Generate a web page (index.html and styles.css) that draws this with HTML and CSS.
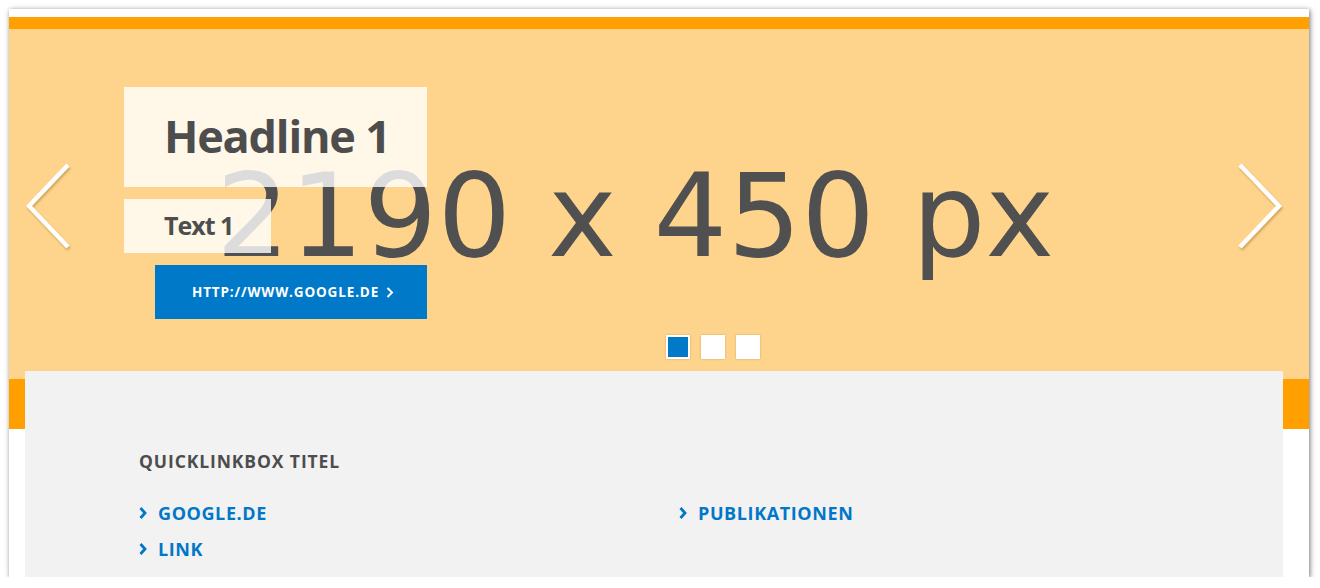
FILE: index.html
```html
<!DOCTYPE html>
<html lang="de">
<head>
<meta charset="utf-8">
<title>Stage</title>
<link rel="stylesheet" href="styles.css">
</head>
<body>
<div class="card">
  <div class="topbar"></div>
  <section class="stage">
    <div class="placeholder">2190 x 450 px</div>
    <div class="stage-content">
      <div class="headline-box"><h1 class="headline">Headline 1</h1></div>
      <div class="text-box"><p class="text">Text 1</p></div>
      <a class="cta" href="#">HTTP://WWW.GOOGLE.DE
        <svg class="cta-chev" width="8" height="11" viewBox="0 0 8 11"><polyline points="1.5,1 6,5.5 1.5,10" fill="none" stroke="#fff" stroke-width="2"/></svg>
      </a>
    </div>
    <button class="arrow arrow-left" aria-label="zurück">
      <svg width="48" height="90" viewBox="0 0 48 90"><polyline points="42,2 3,43 42,84" fill="none" stroke="#fff" stroke-width="4.5" stroke-linejoin="miter"/></svg>
    </button>
    <button class="arrow arrow-right" aria-label="weiter">
      <svg width="48" height="90" viewBox="0 0 48 90"><polyline points="3,2 42,43 3,84" fill="none" stroke="#fff" stroke-width="4.5" stroke-linejoin="miter"/></svg>
    </button>
    <div class="dots">
      <span class="dot dot-active"></span>
      <span class="dot"></span>
      <span class="dot"></span>
    </div>
  </section>
  <section class="lower">
    <div class="quicklinks">
      <h2 class="ql-title">QUICKLINKBOX TITEL</h2>
      <ul class="ql-list">
        <li><a href="#"><svg class="chev" width="8" height="14" viewBox="0 0 8 14"><polyline points="1.5,2 6,7 1.5,12" fill="none" stroke="#0077c8" stroke-width="2.8"/></svg>GOOGLE.DE</a></li>
        <li><a href="#"><svg class="chev" width="8" height="14" viewBox="0 0 8 14"><polyline points="1.5,2 6,7 1.5,12" fill="none" stroke="#0077c8" stroke-width="2.8"/></svg>PUBLIKATIONEN</a></li>
        <li><a href="#"><svg class="chev" width="8" height="14" viewBox="0 0 8 14"><polyline points="1.5,2 6,7 1.5,12" fill="none" stroke="#0077c8" stroke-width="2.8"/></svg>LINK</a></li>
      </ul>
    </div>
  </section>
</div>
</body>
</html>
```
FILE: styles.css
```css
html, body {
  margin: 0;
  padding: 0;
  background: #fff;
}
body {
  padding: 9px 11px 0 9px;
  font-family: "Open Sans", "Noto Sans", sans-serif;
}
.card {
  width: 1300px;
  height: 568px;
  background: #fff;
  padding-top: 8px;
  box-sizing: border-box;
  overflow: hidden;
  box-shadow: 1px 1px 5px rgba(0,0,0,0.55);
}
.topbar {
  height: 12px;
  background: #ffa000;
}
.stage {
  position: relative;
  height: 350px;
  background: #fed48d;
  padding: 58px 0 0 115px;
  box-sizing: border-box;
}
.placeholder {
  position: absolute;
  left: 207px;
  top: 107px;
  font-family: "DejaVu Sans", sans-serif;
  font-size: 116px;
  line-height: 160px;
  color: #505050;
  white-space: nowrap;
}
.stage-content {
  position: relative;
  display: flex;
  flex-direction: column;
  align-items: flex-start;
}
.headline-box {
  width: 303px;
  height: 100px;
  box-sizing: border-box;
  background: rgba(255,255,255,0.8);
  padding: 0 0 3px 40px;
  display: flex;
  align-items: center;
}
.headline {
  margin: 0;
  font-size: 45px;
  font-weight: 700;
  color: #4d4d4d;
  letter-spacing: -1.2px;
  line-height: 1;
}
.text-box {
  margin-top: 12px;
  width: 147px;
  height: 54px;
  box-sizing: border-box;
  background: rgba(255,255,255,0.8);
  padding: 0 0 1px 40px;
  display: flex;
  align-items: center;
}
.text {
  margin: 0;
  font-size: 25px;
  font-weight: 700;
  color: #4d4d4d;
  letter-spacing: -1px;
  line-height: 1;
}
.cta {
  margin: 12px 0 0 31px;
  width: 272px;
  height: 54px;
  box-sizing: border-box;
  background: #0079c8;
  color: #fff;
  text-decoration: none;
  font-size: 13.5px;
  font-weight: 700;
  letter-spacing: 0.85px;
  padding-left: 37px;
  display: flex;
  align-items: center;
  gap: 7px;
}
.cta-chev { display: block; }
.arrow {
  position: absolute;
  top: 134px;
  border: 0;
  padding: 0;
  background: none;
  cursor: pointer;
}
.arrow svg {
  display: block;
  filter: drop-shadow(1px 2px 1px rgba(120,80,0,0.35));
}
.arrow-left { left: 17px; }
.arrow-right { left: 1228px; }
.dots {
  position: absolute;
  left: 657px;
  top: 306px;
  display: flex;
  gap: 11px;
}
.dot {
  width: 24px;
  height: 24px;
  box-sizing: border-box;
  background: #fff;
  box-shadow: 0 0 2px rgba(120,80,0,0.35);
}
.dot-active {
  border: 2px solid #fff;
  background: #0079c8;
}
.lower {
  background: linear-gradient(#ffa000 0, #ffa000 58px, #fff 58px);
  padding: 0 26px 0 16px;
}
.quicklinks {
  position: relative;
  margin-top: -8px;
  background: #f2f2f2;
  height: 220px;
  padding: 78px 0 0 114px;
  box-sizing: border-box;
}
.ql-title {
  margin: 0;
  font-size: 17.5px;
  font-weight: 700;
  color: #4d4d4d;
  letter-spacing: 0.9px;
  line-height: 24px;
}
.ql-list {
  list-style: none;
  margin: 28px 0 0;
  padding: 0;
  display: grid;
  grid-template-columns: 540px 540px;
  row-gap: 12px;
}
.ql-list li {
  line-height: 24px;
}
.ql-list a {
  display: flex;
  align-items: center;
  gap: 11px;
  color: #0077c8;
  text-decoration: none;
  font-size: 18px;
  font-weight: 700;
  letter-spacing: 0.6px;
}
.chev { display: block; }
```
